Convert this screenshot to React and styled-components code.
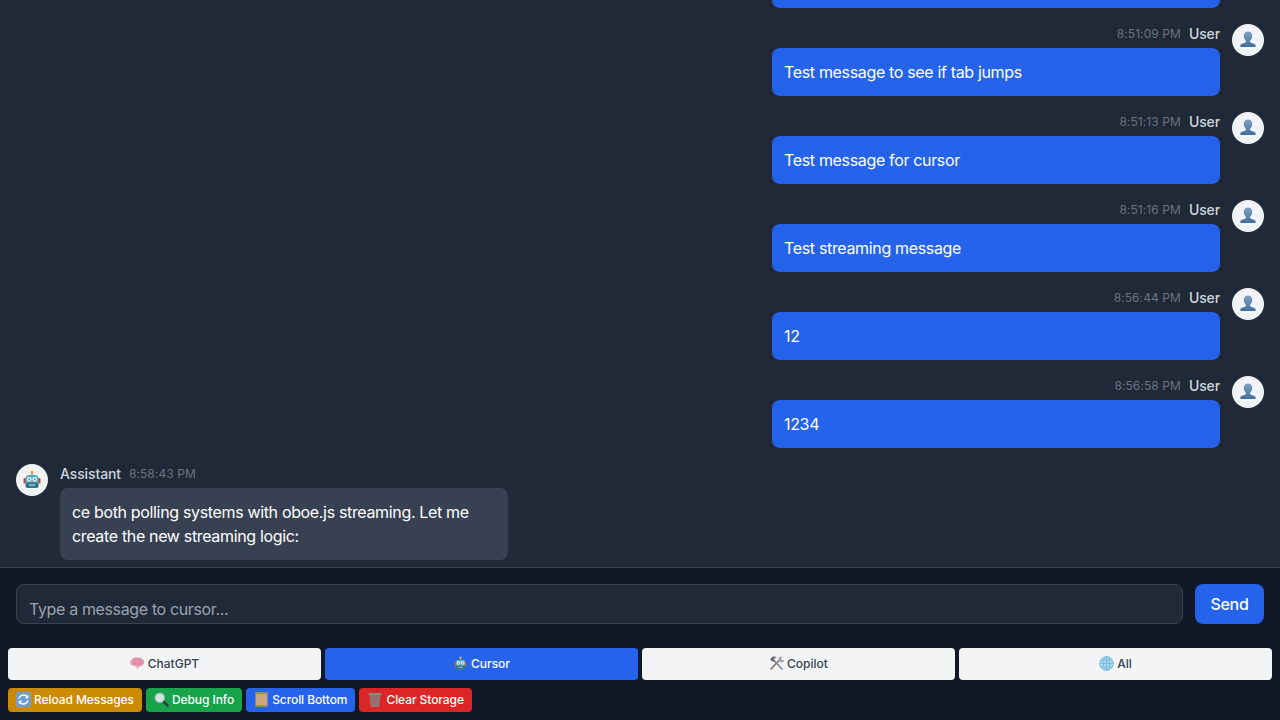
import React from 'react';
import styled, { createGlobalStyle } from 'styled-components';

const GlobalStyle = createGlobalStyle`
  html, body { margin: 0; padding: 0; height: 100%; background: #111827; }
  * { box-sizing: border-box; }
  body { font-family: Inter, "Liberation Sans", sans-serif; }
  #root { height: 100%; }
`;

const Page = styled.div`
  height: 720px;
  display: flex;
  flex-direction: column;
  background: #111827;
  overflow: hidden;
`;
const Messages = styled.div`
  height: 568px;
  flex: none;
  display: flex;
  flex-direction: column;
  justify-content: flex-end;
  gap: 16px;
  padding: 0 16px 7px;
  background: #1f2937;
  border-bottom: 1px solid #374151;
  overflow: hidden;
`;
const Row = styled.div`
  display: flex;
  flex: none;
  flex-direction: ${p => (p.$user ? 'row-reverse' : 'row')};
  gap: 12px;
`;
const Avatar = styled.div`
  width: 32px;
  height: 32px;
  flex: none;
  border-radius: 50%;
  background: #f3f4f6;
  display: flex;
  align-items: center;
  justify-content: center;
`;
const Body = styled.div`
  width: 448px;
  display: flex;
  flex-direction: column;
  gap: 6px;
`;
const Meta = styled.div`
  display: flex;
  height: 18px;
  align-items: center;
  justify-content: ${p => (p.$user ? 'flex-end' : 'flex-start')};
  gap: 8px;
`;
const Name = styled.span`
  font-size: 14px;
  font-weight: 500;
  letter-spacing: -0.12px;
  color: #d1d5db;
`;
const Time = styled.span`
  font-size: 12px;
  letter-spacing: 0.08px;
  color: #6b7280;
`;
const Bubble = styled.div`
  padding: 12px;
  border-radius: 8px;
  font-size: 16px;
  line-height: 24px;
  letter-spacing: -0.34px;
  color: #fff;
  background: ${p => (p.$user ? '#2563eb' : '#374151')};
`;
const BubbleEnd = styled.div`
  flex: none;
  align-self: flex-end;
  width: 448px;
  height: 8px;
  margin-right: 44px;
  border-radius: 0 0 8px 8px;
  background: #2563eb;
`;
const Composer = styled.div`
  flex: none;
  display: flex;
  gap: 12px;
  height: 72px;
  padding: 16px;
`;
const Input = styled.textarea`
  flex: 1;
  height: 40px;
  padding: 12px;
  resize: none;
  overflow: hidden;
  border: 1px solid #374151;
  border-radius: 8px;
  background: #1f2937;
  color: #fff;
  font: 16px/24px Inter, "Liberation Sans", sans-serif;
  letter-spacing: -0.36px;
  outline: none;
  &::placeholder { color: #9ca3af; opacity: 1; }
`;
const Send = styled.button`
  width: 69px;
  height: 40px;
  padding: 0;
  border: 0;
  border-radius: 8px;
  background: #2563eb;
  color: #fff;
  font: 500 16px Inter, "Liberation Sans", sans-serif;
  letter-spacing: -0.3px;
`;
const Tabs = styled.div`
  flex: none;
  display: grid;
  grid-template-columns: repeat(4, 1fr);
  gap: 4px;
  padding: 8px 8px 0;
`;
const Tab = styled.button`
  height: 32px;
  padding: 0 0 2px;
  border: 0;
  border-radius: 4px;
  display: flex;
  align-items: center;
  justify-content: center;
  gap: 3px;
  font: 500 12px Inter, "Liberation Sans", sans-serif;
  background: ${p => (p.$active ? '#2563eb' : '#f3f4f6')};
  color: ${p => (p.$active ? '#fff' : '#374151')};
`;
const Tools = styled.div`
  flex: none;
  display: flex;
  gap: 4px;
  padding: 8px 8px 0;
`;
const Tool = styled.button`
  height: 24px;
  padding: 0 8px 2px;
  border: 0;
  border-radius: 4px;
  display: flex;
  align-items: center;
  gap: 3px;
  font: 500 12px Inter, "Liberation Sans", sans-serif;
  letter-spacing: -0.08px;
  color: #fff;
  background: ${p => p.$bg};
`;

const Person = () => (
  <svg width="20" height="20" viewBox="0 0 20 20">
    <defs>
      <linearGradient id="person" x1="0" y1="0" x2="0" y2="1">
        <stop offset="0" stopColor="#7ba3c4" />
        <stop offset="1" stopColor="#41709c" />
      </linearGradient>
    </defs>
    <path fill="url(#person)" d="M10 1.500c2.600 0 4.200 2 4.200 4.600 0 2-.9 3.700-2.100 4.600v1.200c0 .7 3 1.200 4.600 2.200.8.500 1 1.600 1 2.900H2.300c0-1.300.2-2.400 1-2.900 1.600-1 4.600-1.500 4.600-2.200v-1.200C6.700 9.800 5.800 8.100 5.800 6.100c0-2.600 1.600-4.600 4.200-4.600z" />
  </svg>
);

const Robot = ({ size = 20 }) => (
  <svg width={size} height={size} viewBox="0 0 20 20">
    <rect x="1.500" y="8" width="2.500" height="5.500" rx="1" fill="#c4453c" />
    <rect x="16" y="8" width="2.500" height="5.500" rx="1" fill="#c4453c" />
    <rect x="9.400" y="2.500" width="1.200" height="3" fill="#8a9aa5" />
    <circle cx="10" cy="2.400" r="1.600" fill="#f2a93b" />
    <rect x="3.500" y="5" width="13" height="13" rx="3.500" fill="#58a9b8" />
    <rect x="3.500" y="12.500" width="13" height="5.500" rx="2.500" fill="#2f7688" />
    <circle cx="7.200" cy="9.200" r="2.500" fill="#c3eef5" />
    <circle cx="12.800" cy="9.200" r="2.500" fill="#c3eef5" />
    <circle cx="7.200" cy="9.200" r="1" fill="#5aa5b8" />
    <circle cx="12.800" cy="9.200" r="1" fill="#5aa5b8" />
    <path d="M10 10.500l1.200 1.800H8.800z" fill="#d9584f" />
    <rect x="7" y="14" width="6" height="2" rx=".6" fill="#7fb4bf" />
  </svg>
);

const Brain = () => (
  <svg width="15" height="12" viewBox="0 0 15 12">
    <path fill="#ea9ab0" d="M5 .6c1-.6 2.600-.5 3.400.1 1.300-.4 2.800 0 3.400 1 1.400.3 2.400 1.500 2.300 2.900.5 1.400-.2 2.900-1.500 3.400-.5 1-1.600 1.500-2.700 1.300-.5.500-1.100.7-1.700.6-.2.700-.2 1.300.2 1.800-.8 0-1.500-.5-1.800-1.300-.2-.5-.2-.9-.1-1.300-1.400.4-2.800.2-3.700-.5C1.200 8.500.300 7.400.5 6 0 4.800.5 3.400 1.700 2.800 2.100 1.600 3.500.7 5 .6z" />
    <path fill="none" stroke="#c4607f" strokeWidth=".7" d="M4 3c1 0 1.800.6 2 1.500M8.300 1.500C8 2.700 8.600 3.600 9.800 3.900M11.800 4.200c-.8.500-1.100 1.200-.9 2.100M3 6.300c1.200-.4 2.300 0 2.900 1M7.600 6c.3 1 1 1.500 2 1.500" />
  </svg>
);

const Hammers = () => (
  <svg width="15" height="14" viewBox="0 0 15 14">
    <path stroke="#8a6a4a" strokeWidth="1.500" strokeLinecap="round" d="M2 13L9.500 5" />
    <path stroke="#7d8288" strokeWidth="1.500" strokeLinecap="round" d="M13 13L5 4.500" />
    <path fill="#6c7075" d="M1 3.500L3.500.7c1.500-.4 3-.2 4.200.6L5.500 2.500 4.800 5.800 3.700 5.800z" />
    <path fill="#9aa0a6" d="M9.200 2.600C10 .9 12 .2 13.700 1l-1.800 1.700.5 1.400 1.500.3 1.400-1.500c.4 1.800-.9 3.500-3 3.500-1.700 0-3-1.800-2.600-3.800z" />
  </svg>
);

const Globe = () => (
  <svg width="15" height="15" viewBox="0 0 15 15" fill="none">
    <circle cx="7.500" cy="7.500" r="7" fill="#a9dcee" />
    <g stroke="#6fb6d6" strokeWidth=".8">
      <circle cx="7.500" cy="7.500" r="6.800" />
      <ellipse cx="7.500" cy="7.500" rx="3.200" ry="6.800" />
      <path d="M7.500.7v13.600M.7 7.500h13.600M1.700 4h11.600M1.700 11h11.600" />
    </g>
  </svg>
);

const Reload = () => (
  <svg width="15" height="15" viewBox="0 0 15 15" fill="none">
    <rect width="15" height="15" rx="2.500" fill="#6f9fd0" />
    <path stroke="#fff" strokeWidth="1.400" d="M3 6.500a4.700 4.700 0 0 1 8-2M12 8.500a4.700 4.700 0 0 1-8 2" />
    <path fill="#fff" d="M12.300 2.700v3.600H8.700zM2.700 12.300V8.700h3.600z" />
  </svg>
);

const Lens = () => (
  <svg width="15" height="15" viewBox="0 0 15 15" fill="none">
    <path stroke="#33383c" strokeWidth="2.600" strokeLinecap="round" d="M9.500 9.500L13.600 13.600" />
    <circle cx="5.800" cy="5.800" r="4.900" fill="#cfe6e0" stroke="#8fa5a2" strokeWidth="1" />
  </svg>
);

const Scroll = () => (
  <svg width="15" height="15" viewBox="0 0 15 15">
    <rect x="1.500" y="1" width="12" height="13" fill="#c9a67f" />
    <rect x="1" y="0" width="13" height="2" rx="1" fill="#8f8a84" />
    <rect x="1" y="13" width="13" height="2" rx="1" fill="#8f8a84" />
  </svg>
);

const Trash = () => (
  <svg width="16" height="15" viewBox="0 0 16 15">
    <path fill="#96706f" d="M2.500 2.500h11L12.500 14.500a.6.6 0 0 1-.6.5H4.100a.6.6 0 0 1-.6-.5z" />
    <rect x="1.500" y="1" width="13" height="2" rx=".8" fill="#8a8a8c" />
  </svg>
);

const UserMessage = ({ time, children }) => (
  <Row $user>
    <Avatar><Person /></Avatar>
    <Body>
      <Meta $user>
        <Time>{time}</Time>
        <Name>User</Name>
      </Meta>
      <Bubble $user>{children}</Bubble>
    </Body>
  </Row>
);

const App = () => (
  <Page>
    <GlobalStyle />
    <Messages>
      <BubbleEnd />
      <UserMessage time="8:51:09 PM">Test message to see if tab jumps</UserMessage>
      <UserMessage time="8:51:13 PM">Test message for cursor</UserMessage>
      <UserMessage time="8:51:16 PM">Test streaming message</UserMessage>
      <UserMessage time="8:56:44 PM">12</UserMessage>
      <UserMessage time="8:56:58 PM">1234</UserMessage>
      <Row>
        <Avatar><Robot /></Avatar>
        <Body>
          <Meta>
            <Name>Assistant</Name>
            <Time>8:58:43 PM</Time>
          </Meta>
          <Bubble>ce both polling systems with oboe.js streaming. Let me create the new streaming logic:</Bubble>
        </Body>
      </Row>
    </Messages>
    <Composer>
      <Input rows={1} placeholder="Type a message to cursor..." />
      <Send>Send</Send>
    </Composer>
    <Tabs>
      <Tab><Brain /> ChatGPT</Tab>
      <Tab $active><Robot size={15} /> Cursor</Tab>
      <Tab><Hammers /> Copilot</Tab>
      <Tab><Globe /> All</Tab>
    </Tabs>
    <Tools>
      <Tool $bg="#ca8a04"><Reload /> Reload Messages</Tool>
      <Tool $bg="#16a34a"><Lens /> Debug Info</Tool>
      <Tool $bg="#2563eb"><Scroll /> Scroll Bottom</Tool>
      <Tool $bg="#dc2626"><Trash /> Clear Storage</Tool>
    </Tools>
  </Page>
);

export default App;
